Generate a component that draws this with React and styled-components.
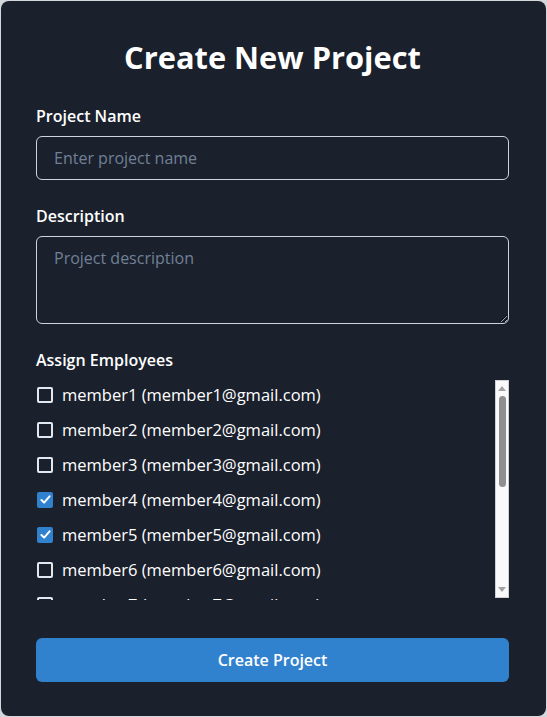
import React, { useState } from "react";
import styled, { createGlobalStyle } from "styled-components";

const GlobalStyle = createGlobalStyle`
  html, body {
    margin: 0;
    padding: 0;
    background: #d4d7dc;
  }
  body {
    font-family: "Open Sans", "Noto Sans", sans-serif;
  }
`;

const Card = styled.div`
  box-sizing: border-box;
  width: 545px;
  height: 715px;
  margin: 1px;
  background: #1a202c;
  border-radius: 8px;
  padding: 38px 37px 34px 35px;
  display: flex;
  flex-direction: column;
  color: #ffffff;
`;

const Title = styled.h1`
  margin: 0 0 29px 0;
  text-align: center;
  font-size: 30.8px;
  line-height: 36px;
  font-weight: 700;
`;

const Field = styled.div`
  display: flex;
  flex-direction: column;
  margin-bottom: ${(p) => p.$gap ?? 24}px;
`;

const Label = styled.label`
  font-size: 16px;
  line-height: 24px;
  font-weight: 600;
  margin-bottom: ${(p) => p.$gap || 8}px;
`;

const inputBase = `
  box-sizing: border-box;
  width: 100%;
  background: transparent;
  border: 1px solid #cbd5e0;
  border-radius: 6px;
  color: #ffffff;
  font-family: "Open Sans", "Noto Sans", sans-serif;
  font-size: 16px;
  padding: 0 17px;
  outline: none;
  &::placeholder {
    color: #718096;
  }
`;

const TextInput = styled.input`
  ${inputBase}
  height: 44px;
`;

const TextArea = styled.textarea`
  ${inputBase}
  height: 88px;
  padding-top: 9px;
  line-height: 24px;
  resize: vertical;
`;

const ListWrap = styled.div`
  display: flex;
  height: 223px;
`;

const ScrollArea = styled.div`
  flex: 1;
  overflow: hidden;
  display: flex;
  flex-direction: column;
`;

const Bar = styled.div`
  box-sizing: border-box;
  width: 14px;
  margin: 3px 0 2px 0;
  background: #fafafa;
  border: 1px solid #d0d0d0;
  display: flex;
  flex-direction: column;
  align-items: center;
`;

const Arrow = styled.div`
  width: 0;
  height: 0;
  margin: 5px 0;
  border-left: 4px solid transparent;
  border-right: 4px solid transparent;
  ${(p) =>
    p.$down
      ? "border-top: 5px solid #a3a3a3; margin-top: auto;"
      : "border-bottom: 5px solid #a3a3a3;"}
`;

const Thumb = styled.div`
  width: 7px;
  height: 91px;
  border-radius: 4px;
  background: #8f8f8f;
`;

const Row = styled.label`
  display: flex;
  align-items: center;
  flex-shrink: 0;
  height: 35px;
  gap: 9px;
  font-size: 16.5px;
  white-space: nowrap;
  cursor: pointer;
`;

const Box = styled.span`
  box-sizing: border-box;
  width: 16px;
  height: 16px;
  margin-left: 1px;
  border-radius: 2px;
  border: 2px solid ${(p) => (p.$checked ? "#3182ce" : "#e2e8f0")};
  background: ${(p) => (p.$checked ? "#3182ce" : "transparent")};
  display: flex;
  align-items: center;
  justify-content: center;
  flex-shrink: 0;
`;

const Button = styled.button`
  margin-top: auto;
  height: 44px;
  width: 100%;
  border: none;
  border-radius: 6px;
  background: #3182ce;
  color: #ffffff;
  font-family: "Open Sans", "Noto Sans", sans-serif;
  font-size: 16px;
  font-weight: 600;
  cursor: pointer;
`;

const Check = () => (
  <svg width="11" height="9" viewBox="0 0 12 10">
    <polyline
      points="1.5,5.5 4.5,8.5 10.5,1.5"
      fill="none"
      stroke="#ffffff"
      strokeWidth="2.2"
      strokeLinecap="round"
      strokeLinejoin="round"
    />
  </svg>
);

const members = Array.from({ length: 13 }, (_, i) => ({
  id: i + 1,
  name: `member${i + 1}`,
  email: `member${i + 1}@gmail.com`,
}));

const App = () => {
  const [selected, setSelected] = useState([4, 5]);

  const toggle = (id) =>
    setSelected((s) => (s.includes(id) ? s.filter((x) => x !== id) : [...s, id]));

  return (
    <>
      <GlobalStyle />
      <Card>
        <Title>Create New Project</Title>
        <Field>
          <Label>Project Name</Label>
          <TextInput placeholder="Enter project name" />
        </Field>
        <Field>
          <Label>Description</Label>
          <TextArea placeholder="Project description" />
        </Field>
        <Field $gap={0}>
          <Label $gap={5}>Assign Employees</Label>
          <ListWrap>
            <ScrollArea>
              {members.map((m) => {
                const on = selected.includes(m.id);
                return (
                  <Row key={m.id} onClick={() => toggle(m.id)}>
                    <Box $checked={on}>{on && <Check />}</Box>
                    {m.name} ({m.email})
                  </Row>
                );
              })}
            </ScrollArea>
            <Bar>
              <Arrow />
              <Thumb />
              <Arrow $down />
            </Bar>
          </ListWrap>
        </Field>
        <Button>Create Project</Button>
      </Card>
    </>
  );
};

export default App;
